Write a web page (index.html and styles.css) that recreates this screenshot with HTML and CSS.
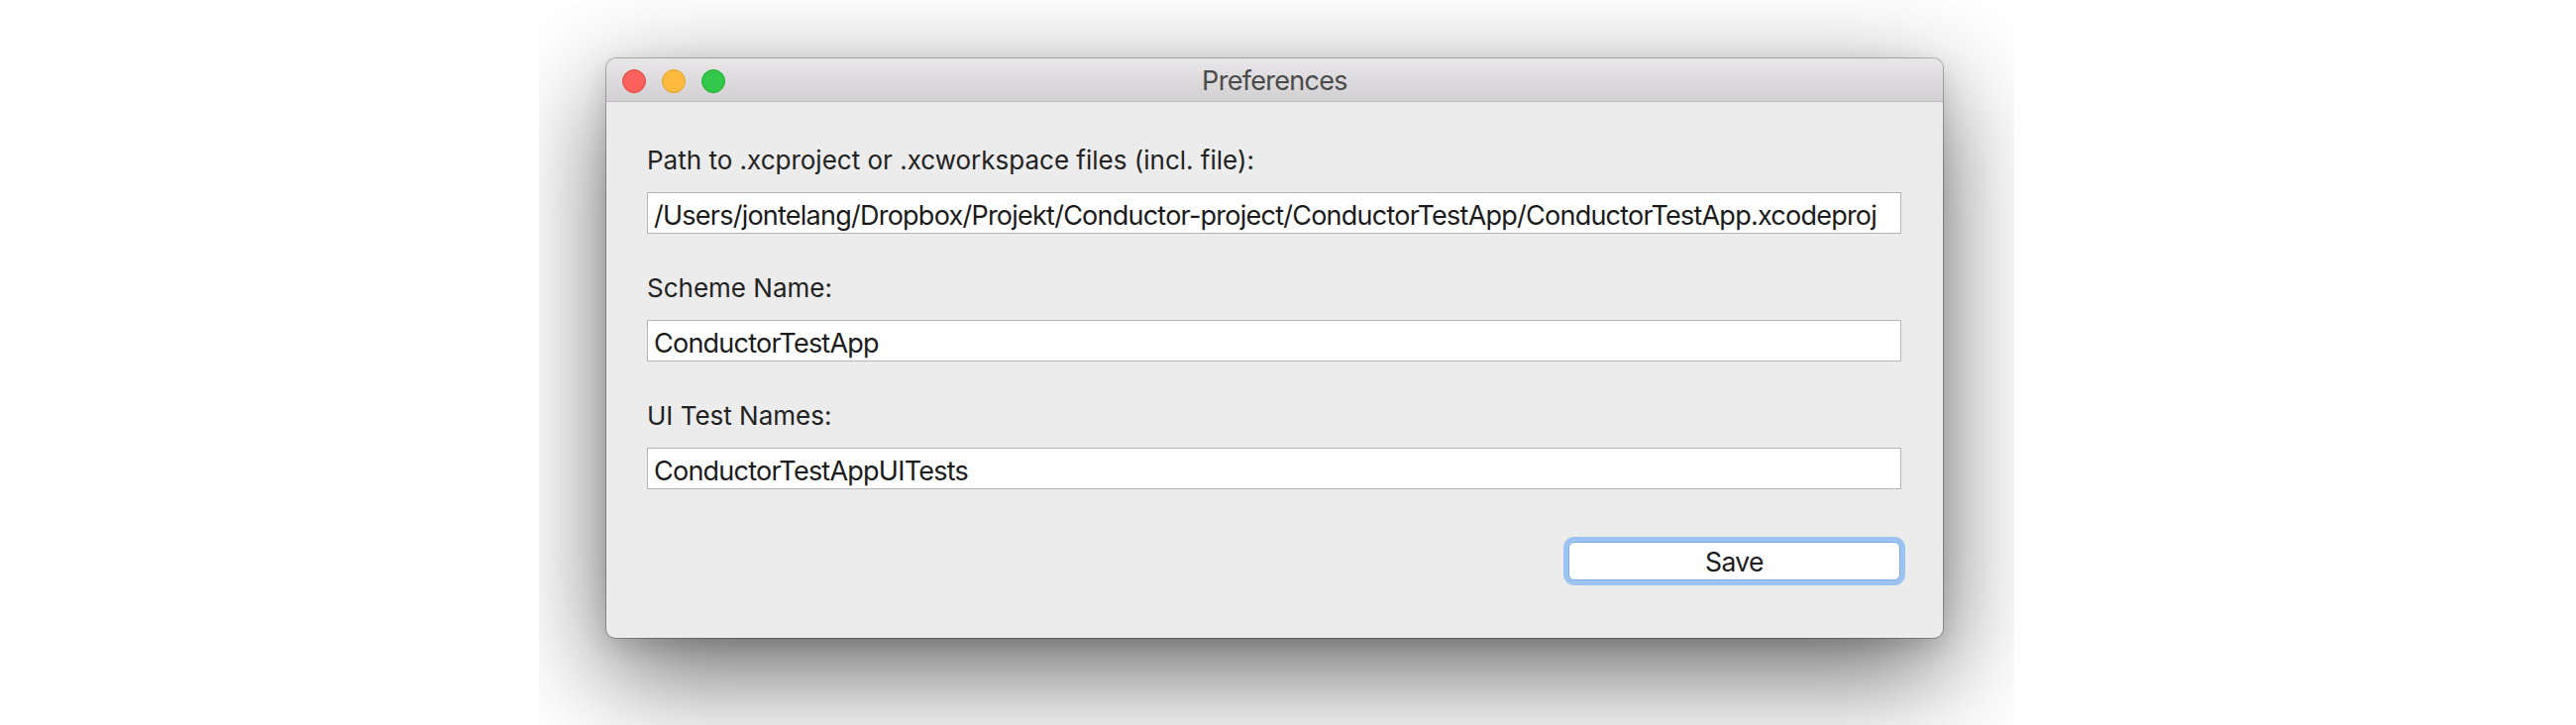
FILE: index.html
```html
<!DOCTYPE html>
<html lang="en">
<head>
<meta charset="utf-8">
<title>Preferences</title>
<link rel="stylesheet" href="styles.css">
</head>
<body>
<div class="stage">
  <div class="capture">
    <div class="window">
      <div class="titlebar">
        <div class="lights">
          <span class="light red"></span>
          <span class="light yellow"></span>
          <span class="light green"></span>
        </div>
        <div class="title">Preferences</div>
        <div></div>
      </div>
      <div class="content">
        <div class="field">
          <div class="label">Path to .xcproject or .xcworkspace files (incl. file):</div>
          <div class="input">/Users/jontelang/Dropbox/Projekt/Conductor-project/ConductorTestApp/ConductorTestApp.xcodeproj</div>
        </div>
        <div class="field">
          <div class="label">Scheme Name:</div>
          <div class="input">ConductorTestApp</div>
        </div>
        <div class="field">
          <div class="label">UI Test Names:</div>
          <div class="input">ConductorTestAppUITests</div>
        </div>
        <div class="actions">
          <button class="btn">Save</button>
        </div>
      </div>
    </div>
  </div>
</div>
</body>
</html>
```

FILE: styles.css
```css
html, body {
  margin: 0;
  padding: 0;
  background: #ffffff;
}
body {
  width: 2600px;
  height: 732px;
  overflow: hidden;
  font-family: Inter, "Liberation Sans", sans-serif;
  color: #1f1f1f;
}
.stage {
  display: flex;
  padding-left: 544px;
}
.capture {
  width: 1489px;
  height: 732px;
  overflow: hidden;
  padding: 59px 0 0 68px;
  box-sizing: border-box;
}
.window {
  width: 1349px;
  height: 585px;
  border-radius: 10px 10px 9px 9px;
  background: #ececec;
  display: flex;
  flex-direction: column;
  overflow: hidden;
  box-shadow:
    0 0 0 1px rgba(0, 0, 0, 0.26),
    0 36px 110px rgba(0, 0, 0, 0.6),
    0 8px 24px rgba(0, 0, 0, 0.12);
}
.titlebar {
  height: 43px;
  border-bottom: 1px solid #b9b9b9;
  background: linear-gradient(#e8e6e8, #d2d0d2);
  display: grid;
  grid-template-columns: 1fr auto 1fr;
  align-items: start;
}
.lights {
  display: flex;
  gap: 16px;
  padding: 11px 0 0 16px;
}
.light {
  width: 24px;
  height: 24px;
  border-radius: 50%;
  box-sizing: border-box;
}
.red { background: #fc605c; border: 1px solid #e0443e; }
.yellow { background: #fdbc40; border: 1px solid #dea123; }
.green { background: #34c84a; border: 1px solid #1aab29; }
.title {
  font-size: 27px;
  letter-spacing: -0.7px;
  line-height: 41px;
  padding-top: 2px;
  color: #4a4a4a;
}
.content {
  flex: 1;
  display: flex;
  flex-direction: column;
  gap: 40px;
  padding: 44px 42px 0 41px;
}
.field {
  display: flex;
  flex-direction: column;
  gap: 17px;
}
.label {
  font-size: 26px;
  line-height: 30px;
  height: 30px;
  color: #222;
}
.input {
  height: 42px;
  box-sizing: border-box;
  background: #fff;
  border: 1px solid #b4b4b4;
  padding: 8px 6px 0;
  font-size: 27px;
  letter-spacing: -0.76px;
  line-height: 30px;
  color: #1b1b1b;
  white-space: nowrap;
}
.actions {
  display: flex;
  justify-content: flex-end;
  padding-top: 13px;
  padding-right: 1px;
}
.btn {
  width: 335px;
  height: 39px;
  box-sizing: border-box;
  background: #fff;
  border: 1px solid #7eaae4;
  border-radius: 6px;
  box-shadow: 0 0 0 5px #9cc3f2;
  font-family: Inter, "Liberation Sans", sans-serif;
  font-size: 26.5px;
  letter-spacing: -0.6px;
  color: #1b1b1b;
  padding: 0;
}
```
